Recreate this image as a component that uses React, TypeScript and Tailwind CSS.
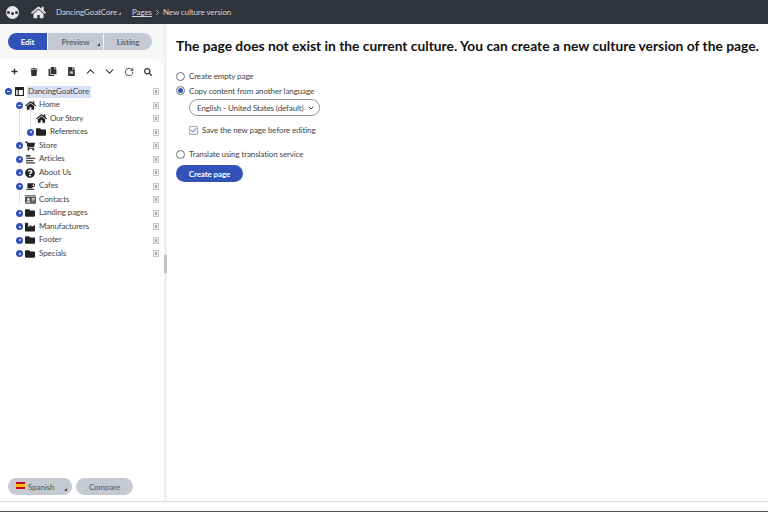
import React from 'react';
import {
  FaHome,
  FaFolder,
  FaShoppingCart,
  FaQuestionCircle,
  FaCoffee,
  FaIdCard,
  FaIndustry,
  FaTrash,
  FaCopy,
  FaFileAlt,
  FaSearch,
  FaPlus,
} from 'react-icons/fa';
import { LuChevronUp, LuChevronDown, LuChevronRight, LuRotateCw, LuCheck } from 'react-icons/lu';

interface TreeNode {
  label: string;
  icon: React.ReactNode;
  level: number;
  toggle: 'none' | 'minus' | 'plus';
  selected?: boolean;
}

const Articles = () => (
  <svg viewBox="0 0 12 12" className="w-[11px] h-[11px]" fill="#444">
    <rect x="1" y="1" width="5" height="2" />
    <rect x="1" y="4" width="10" height="1.4" />
    <rect x="1" y="6.5" width="8" height="1.4" />
    <rect x="1" y="9" width="10" height="1.4" />
  </svg>
);

const Root = () => (
  <svg viewBox="0 0 12 12" className="w-[9px] h-[9px]" fill="#222">
    <path d="M0 0h12v12H0z M1.5 4v6.5h2V4z M5 4v6.5h5.5V4z" fillRule="evenodd" />
  </svg>
);

const nodes: TreeNode[] = [
  { label: 'DancingGoatCore', icon: <Root />, level: 0, toggle: 'minus', selected: true },
  { label: 'Home', icon: <FaHome size={11} />, level: 1, toggle: 'minus' },
  { label: 'Our Story', icon: <FaHome size={11} />, level: 2, toggle: 'none' },
  { label: 'References', icon: <FaFolder size={10} />, level: 2, toggle: 'plus' },
  { label: 'Store', icon: <FaShoppingCart size={10} />, level: 1, toggle: 'plus' },
  { label: 'Articles', icon: <Articles />, level: 1, toggle: 'plus' },
  { label: 'About Us', icon: <FaQuestionCircle size={10} />, level: 1, toggle: 'plus' },
  { label: 'Cafes', icon: <FaCoffee size={9} />, level: 1, toggle: 'plus' },
  { label: 'Contacts', icon: <FaIdCard size={11} color="#555" />, level: 1, toggle: 'none' },
  { label: 'Landing pages', icon: <FaFolder size={10} />, level: 1, toggle: 'plus' },
  { label: 'Manufacturers', icon: <FaIndustry size={10} />, level: 1, toggle: 'plus' },
  { label: 'Footer', icon: <FaFolder size={10} />, level: 1, toggle: 'plus' },
  { label: 'Specials', icon: <FaFolder size={10} />, level: 1, toggle: 'plus' },
];

const Toggle = ({ type }: { type: 'none' | 'minus' | 'plus' }) => {
  if (type === 'none') return <span className="block w-[7px] h-[7px] shrink-0" />;
  return (
    <span className="w-[7px] h-[7px] shrink-0 rounded-full bg-[#3352b8] flex items-center justify-center">
      {type === 'minus' ? (
        <span className="w-[3px] h-px bg-[#dfe5f7]" />
      ) : (
        <span className="w-[2px] h-[2px] bg-[#dfe5f7] rounded-full" />
      )}
    </span>
  );
};

const Radio = ({ checked }: { checked?: boolean }) => (
  <span className="w-[9px] h-[9px] rounded-full border border-[#6b6f78] bg-white flex items-center justify-center shrink-0">
    {checked && <span className="w-[5px] h-[5px] rounded-full bg-[#3352b8]" />}
  </span>
);

const Corner = () => (
  <span className="w-0 h-0 border-l-[3px] border-l-transparent border-b-[3px] border-b-[#444]" />
);

const App: React.FC = () => {
  return (
    <div className="w-[768px] h-[512px] flex flex-col bg-white text-[#444] overflow-hidden font-['Lato','Roboto',sans-serif] text-[8px] tracking-[-0.1px]">
      <header className="h-6 shrink-0 bg-[#32343c] flex items-center text-[#d5d7dc]">
        <span className="ml-[6px] w-[13px] h-[13px] rounded-full bg-[#e8e8ea] flex items-center justify-center gap-px">
          <span className="w-[3px] h-[3px] rounded-full bg-[#32343c]" />
          <span className="w-[3px] h-[3px] rounded-full bg-[#32343c] mt-[3px]" />
          <span className="w-[3px] h-[3px] rounded-full bg-[#32343c]" />
        </span>
        <FaHome size={15} color="#e8e8ea" className="ml-[12px]" />
        <span className="ml-[10px] w-[60px] whitespace-nowrap">DancingGoatCore</span>
        <span className="ml-[2px] mt-[3px] w-0 h-0 border-l-[3px] border-l-transparent border-b-[3px] border-b-[#9a9ca3]" />
        <span className="ml-[11px] underline">Pages</span>
        <LuChevronRight size={9} className="mx-[1px]" />
        <span>New culture version</span>
      </header>

      <div className="flex-1 flex min-h-0">
        <aside className="w-[164px] shrink-0 flex flex-col bg-[#f6f6f7]">
          <div className="h-[35px] pt-[9px] pl-2 shrink-0 flex">
            <button className="w-[39px] h-[17px] rounded-l-full bg-[#3352b8] text-white font-bold">Edit</button>
            <button className="w-[55px] h-[17px] ml-px bg-[#c5c9d1] relative font-bold text-[#666]">
              Preview
              <span className="absolute right-[3px] bottom-[4px] flex"><Corner /></span>
            </button>
            <button className="w-[48px] h-[17px] ml-px rounded-r-full bg-[#c5c9d1] font-bold text-[#666]">Listing</button>
          </div>

          <div className="flex-1 bg-white rounded-tr-[10px] flex flex-col min-h-0">
            <div className="flex items-center h-[25px] pl-[5px] text-[#333]">
              <span className="w-[19px] flex justify-center"><FaPlus size={7} /></span>
              <span className="w-[19px] flex justify-center"><FaTrash size={8} /></span>
              <span className="w-[19px] flex justify-center"><FaCopy size={9} /></span>
              <span className="w-[19px] flex justify-center"><FaFileAlt size={9} /></span>
              <span className="w-[19px] flex justify-center"><LuChevronUp size={13} /></span>
              <span className="w-[19px] flex justify-center"><LuChevronDown size={13} /></span>
              <span className="w-[19px] flex justify-center"><LuRotateCw size={10} /></span>
              <span className="w-[19px] flex justify-center"><FaSearch size={8} /></span>
            </div>

            <div className="relative pt-px">
              <span className="absolute left-[19px] top-[12px] h-[108px] w-px bg-[#e3e3e3]" />
              <span className="absolute left-[30px] top-[26px] h-[18px] w-px bg-[#e3e3e3]" />
              {nodes.map((node) => (
                <div key={node.label} className="h-[13.5px] flex items-center relative">
                  <span className={`block ${node.level === 0 ? 'ml-[5px]' : node.level === 1 ? 'ml-[16px]' : 'ml-[27px]'}`}>
                    <Toggle type={node.toggle} />
                  </span>
                  <span className="w-[12px] ml-[1px] flex justify-center text-[#222] shrink-0">
                    {node.icon}
                  </span>
                  <span className={`ml-[2px] px-[1px] leading-[11px] pb-px ${node.selected ? 'bg-[#d7e0f7] pr-[2px]' : ''}`}>
                    {node.label}
                  </span>
                  <span className="absolute left-[153px] top-[3px] w-[6px] h-[7px] border border-[#c9c9c9] bg-[#efefef] flex items-center justify-center">
                    <span className="w-[2px] h-[3px] bg-[#a9a9a9]" />
                  </span>
                </div>
              ))}
            </div>

            <div className="mt-auto h-[34px] pt-[11px] pl-2 flex gap-1">
              <button className="w-[64px] h-[17px] rounded-full bg-[#c5c9d1] flex items-center pl-[8px] relative text-[#555]">
                <span className="w-[9px] h-[7px] bg-[#f1bf00] border-y-[2px] border-[#c60b1e] -mt-[2px]" />
                <span className="ml-[3px]">Spanish</span>
                <span className="absolute right-[5px] bottom-[4px] flex"><Corner /></span>
              </button>
              <button className="w-[57px] h-[17px] rounded-full bg-[#c5c9d1] text-[#555]">Compare</button>
            </div>
          </div>
        </aside>

        <div className="w-[3px] shrink-0 bg-[#f1f1f1] flex items-center">
          <span className="w-[3px] h-[18px] bg-[#c3c3c3] mt-[2px]" />
        </div>

        <main className="flex-1 pl-[9px] pt-[12px]">
          <h1 className="text-[13.8px] leading-[20px] font-bold text-[#111] whitespace-nowrap tracking-normal">
            The page does not exist in the current culture. You can create a new culture version of the page.
          </h1>
          <div className="mt-[13px] flex flex-col">
            <label className="h-[14.5px] flex items-center gap-1"><Radio />Create empty page</label>
            <label className="h-[14.5px] flex items-center gap-1"><Radio checked />Copy content from another language</label>
            <div className="ml-[13px] mt-px w-[131px] h-[17px] rounded-full border border-[#8f939c] flex items-center justify-between pl-[7px] pr-[4px] bg-white whitespace-nowrap">
              <span>English - United States (default)</span>
              <LuChevronDown size={8} strokeWidth={3} />
            </div>
            <label className="ml-[13px] mt-[7px] h-[14px] flex items-center gap-1">
              <span className="w-[9px] h-[9px] rounded-[1px] border border-[#aaa] bg-[#f3f3f3] flex items-center justify-center text-[#3352b8]">
                <LuCheck size={7} strokeWidth={3} />
              </span>
              Save the new page before editing
            </label>
            <label className="mt-[10px] h-[14px] flex items-center gap-1"><Radio />Translate using translation service</label>
            <button className="mt-[4px] w-[67px] h-[17px] rounded-full bg-[#3352b8] text-white font-bold">Create page</button>
          </div>
        </main>
      </div>

      <footer className="h-[11px] shrink-0 border-t border-[#dedede] border-b border-b-[#555] bg-white" />
    </div>
  );
};

export default App;
